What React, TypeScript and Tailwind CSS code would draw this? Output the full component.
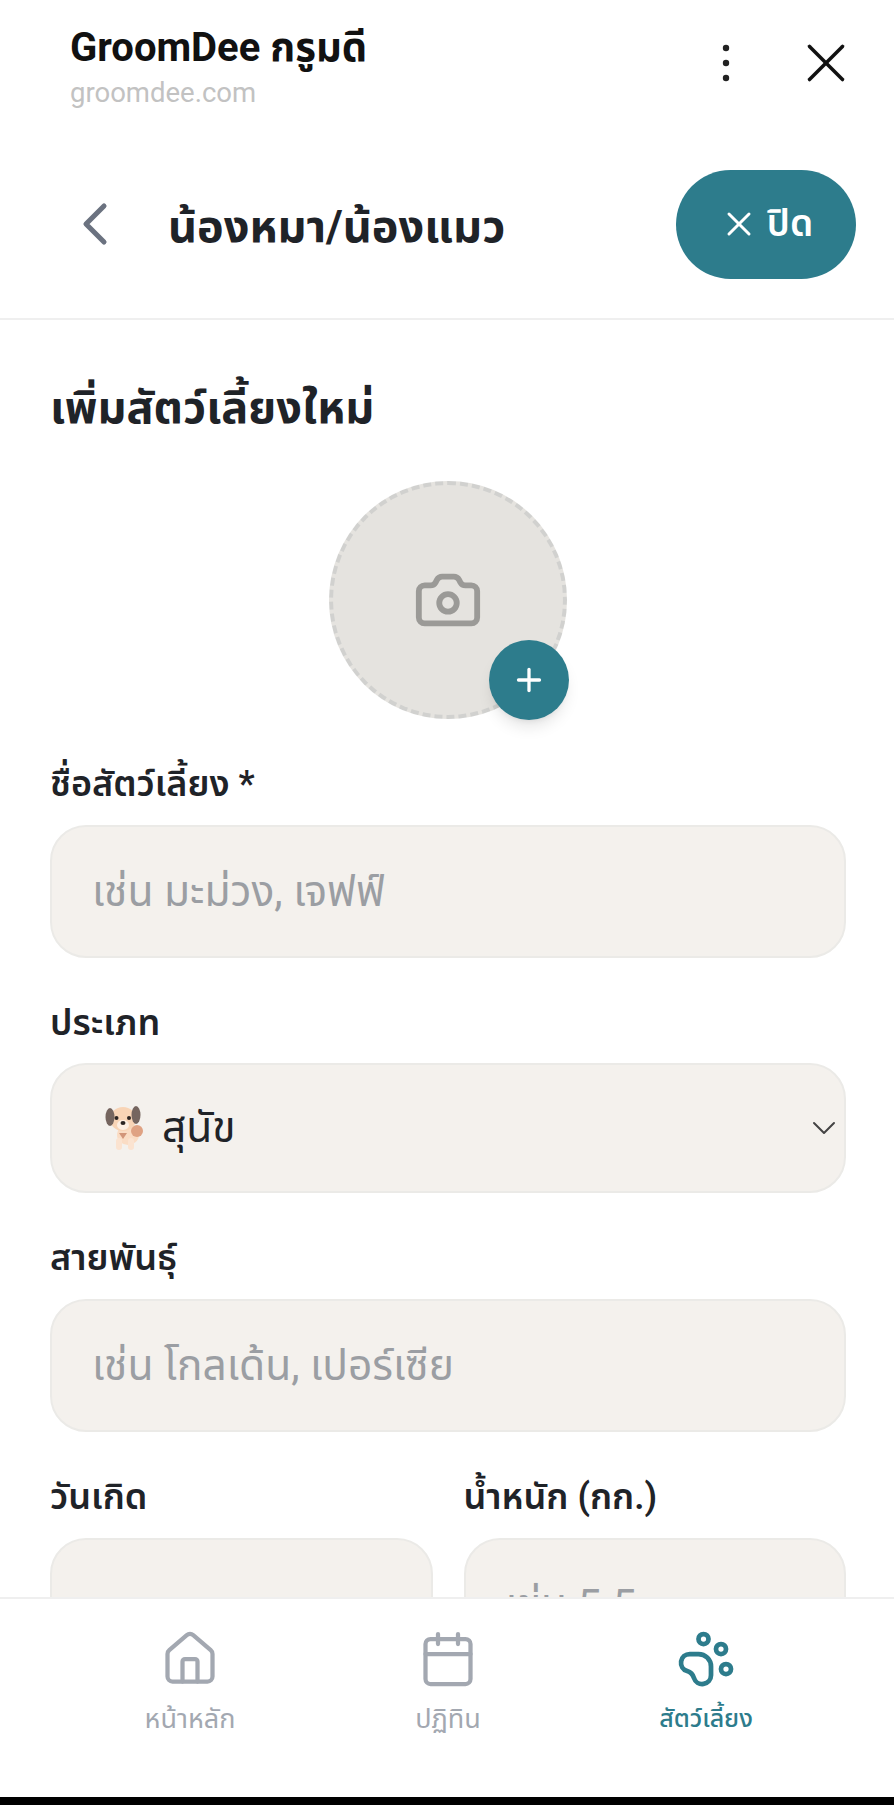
import { Calendar, Camera, ChevronDown, ChevronLeft, House, PawPrint, Plus, X } from "lucide-react";

const font = "font-['Roboto','Noto_Sans','Noto_Sans_Thai','DejaVu_Sans',sans-serif]";

function DogIcon() {
  return (
    <svg width="44" height="46" viewBox="0 0 44 46">
      <ellipse cx="24" cy="30" rx="11" ry="10" fill="#fadcc4" />
      <circle cx="33" cy="26" r="6" fill="#dfa283" />
      <rect x="12" y="33" width="6" height="12" rx="3" fill="#fbe3d0" />
      <rect x="24" y="33" width="6" height="12" rx="3" fill="#fbe3d0" />
      <ellipse cx="19" cy="14" rx="13" ry="12" fill="#f8d4b6" />
      <ellipse cx="6" cy="12" rx="4.5" ry="9" fill="#75655f" />
      <ellipse cx="32" cy="10" rx="4.5" ry="9" fill="#75655f" />
      <ellipse cx="19" cy="20" rx="6" ry="5" fill="#fdeee2" />
      <circle cx="12.5" cy="13" r="2" fill="#2b2422" />
      <circle cx="25" cy="13" r="2" fill="#2b2422" />
      <ellipse cx="19" cy="18" rx="2.5" ry="2" fill="#2b2422" />
      <path d="M15 28h8l-4 6z" fill="#d29579" />
    </svg>
  );
}

function DotsIcon() {
  return (
    <svg width="20" height="40" viewBox="0 0 20 40" className="mb-[4px] fill-[#222]">
      <circle cx="10" cy="5" r="3.2" />
      <circle cx="10" cy="20" r="3.2" />
      <circle cx="10" cy="35" r="3.2" />
    </svg>
  );
}

function Field({ label, placeholder }: { label: string; placeholder: string }) {
  return (
    <div className="min-w-0 flex-1">
      <label className="block h-[39px] text-[36px] leading-[39px] font-semibold whitespace-nowrap text-[#1f2328]">{label}</label>
      <input
        placeholder={placeholder}
        className="mt-[21px] h-[133px] w-full rounded-[36px] border-2 border-[#ebeae7] bg-[#f4f1ed] px-[40px] text-[42.5px] text-[#1f2328] placeholder:text-[#9b9ea3] outline-none"
      />
    </div>
  );
}

function NavItem({ icon, label, active }: { icon: React.ReactNode; label: string; active?: boolean }) {
  return (
    <div className={`flex w-[258px] flex-col items-center ${active ? "text-[#2d7c8c]" : "text-[#a3a8b1]"}`}>
      {icon}
      <span className={`mt-[14px] leading-[32px] ${active ? "text-[25px] font-medium" : "text-[27px] font-normal"}`}>{label}</span>
    </div>
  );
}

export default function App() {
  return (
    <div className={`flex h-[1805px] w-[894px] flex-col overflow-hidden bg-white ${font}`}>
      <div className="flex h-[130px] shrink-0 items-center pr-[35px] pl-[70px]">
        <div className="flex-1 pt-[4px]">
          <div className="text-[40px] leading-[46px] font-bold text-[#111]">GroomDee กรูมดี</div>
          <div className="mt-[6px] text-[27.5px] leading-[32px] text-[#c2c2c2]">groomdee.com</div>
        </div>
        <DotsIcon />
        <X size={66} strokeWidth={1.3} className="mb-[4px] ml-[57px] text-[#111]" />
      </div>

      <div className="flex h-[190px] shrink-0 items-center border-b-2 border-[#efefef] pr-[38px] pl-[59px]">
        <ChevronLeft size={72} strokeWidth={1.7} className="text-[#6b7280]" />
        <h1 className="mt-[6px] ml-[37px] flex-1 text-[45px] font-bold text-[#1f2328]">น้องหมา/น้องแมว</h1>
        <button className="flex h-[109px] w-[180px] items-center justify-center gap-[8px] rounded-[55px] bg-[#2d7c8c] text-[37px] font-semibold text-white">
          <X size={40} strokeWidth={1.8} />
          ปิด
        </button>
      </div>

      <main className="relative min-h-0 flex-1 overflow-hidden pt-[58px] pr-[48px] pl-[50px]">
        <h2 className="text-[45px] leading-[60px] font-bold text-[#1f2328]">เพิ่มสัตว์เลี้ยงใหม่</h2>
        <div className="relative mx-auto mt-[43px] flex h-[238px] w-[238px] items-center justify-center rounded-full border-[4px] border-dashed border-[#d1d1cf] bg-[#e5e3df]">
          <Camera size={70} strokeWidth={2} className="text-[#9b9a97]" />
          <div className="absolute -right-[6px] -bottom-[5px] flex h-[80px] w-[80px] items-center justify-center rounded-full bg-[#2d7c8c] text-white shadow-lg">
            <Plus size={36} strokeWidth={2.2} />
          </div>
        </div>
        <div className="mt-[46px] flex flex-col gap-[46px]">
          <Field label="ชื่อสัตว์เลี้ยง *" placeholder="เช่น มะม่วง, เจฟฟ์" />
          <div>
            <label className="block h-[39px] text-[36px] leading-[39px] font-semibold text-[#1f2328]">ประเภท</label>
            <div className="mt-[20px] flex h-[130px] items-center rounded-[36px] border-2 border-[#ebeae7] bg-[#f4f1ed] pl-[52px]">
              <DogIcon />
              <span className="ml-[14px] flex-1 text-[42.5px] text-[#1f2328]">สุนัข</span>
              <ChevronDown size={40} strokeWidth={1.2} className="text-[#444]" />
            </div>
          </div>
          <Field label="สายพันธุ์" placeholder="เช่น โกลเด้น, เปอร์เซีย" />
          <div className="flex gap-[31px]">
            <Field label="วันเกิด" placeholder="" />
            <Field label="น้ำหนัก (กก.)" placeholder="เช่น 5.5" />
          </div>
        </div>
      </main>

      <nav className="flex h-[200px] shrink-0 justify-center border-t-2 border-[#efefef] bg-white pt-[30px] pl-[2px]">
        <NavItem icon={<House size={60} strokeWidth={1.7} />} label="หน้าหลัก" />
        <NavItem icon={<Calendar size={60} strokeWidth={1.7} />} label="ปฏิทิน" />
        <NavItem icon={<PawPrint size={60} strokeWidth={1.9} />} label="สัตว์เลี้ยง" active />
      </nav>
      <div className="h-[8px] shrink-0 bg-black" />
    </div>
  );
}
